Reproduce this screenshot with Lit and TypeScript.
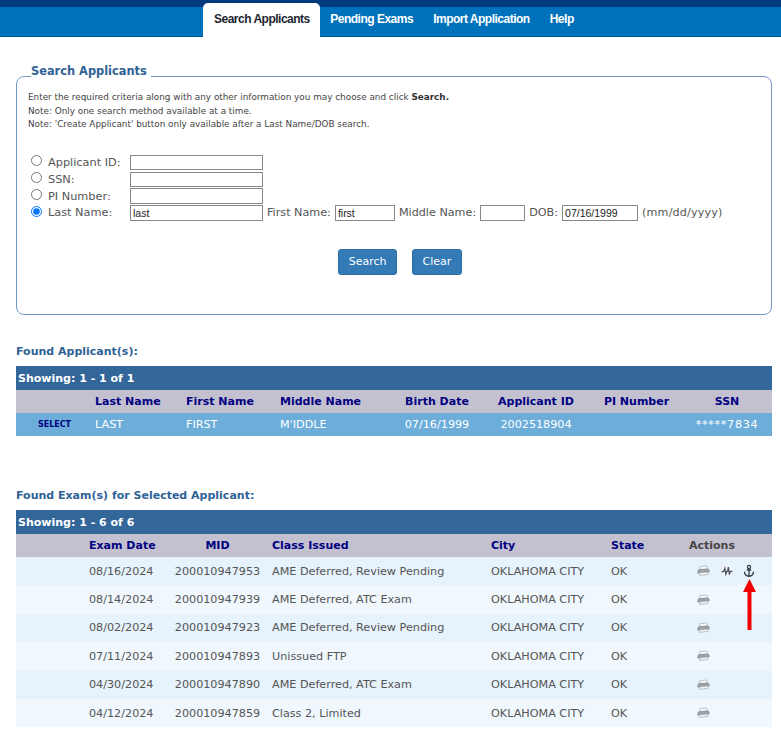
import { LitElement, css, html, svg } from 'lit';
import { customElement } from 'lit/decorators.js';

const printer = svg`<svg class="ico printer" width="13" height="12" viewBox="0 0 13 12">
  <path d="M3 1.6 L9.6 1 L10.6 4 L2.6 4.6 Z" fill="#fbfcfd" stroke="#a4abb1" stroke-width=".7"/>
  <path d="M.8 6 Q.8 4.6 2.8 4.5 L10.4 4 Q12.2 4 12.2 5.4 L12.2 7 L.8 8.2 Z" fill="#9aa3aa" stroke="#7b848a" stroke-width=".5"/>
  <path d="M2 8 L11.4 7 L11 9.4 L2.6 10.4 Z" fill="#f4f6f8" stroke="#a4abb1" stroke-width=".7"/>
</svg>`;

const pulse = svg`<svg class="ico" width="14" height="14" viewBox="0 0 14 14">
  <circle cx="7" cy="7" r="6.5" fill="#f1f2f7"/>
  <path d="M1.5 7.6 H3.6 L4.8 4.4 L5.8 10 L7 7.2 H7.6 L8.4 3.2 L9.4 10.6 L10.4 7.4 H12.5" fill="none" stroke="#46505e" stroke-width="1.25"/>
</svg>`;

const anchor = svg`<svg class="ico" width="14" height="14" viewBox="0 0 14 14">
  <circle cx="7" cy="3" r="1.6" fill="none" stroke="#2f3a44" stroke-width="1.2"/>
  <path d="M7 4.4 V12.2 M4.8 6 H9.2 M2.4 7.6 Q2.8 11.8 7 12.4 Q11.2 11.8 11.6 7.6" fill="none" stroke="#2f3a44" stroke-width="1.3"/>
</svg>`;

const exams = [
  ['08/16/2024', '200010947953', 'AME Deferred, Review Pending', true],
  ['08/14/2024', '200010947939', 'AME Deferred, ATC Exam', false],
  ['08/02/2024', '200010947923', 'AME Deferred, Review Pending', false],
  ['07/11/2024', '200010947893', 'Unissued FTP', false],
  ['04/30/2024', '200010947890', 'AME Deferred, ATC Exam', false],
  ['04/12/2024', '200010947859', 'Class 2, Limited', false],
] as const;

@customElement('app-root')
export class AppRoot extends LitElement {
  static styles = css`
    :host {
      display: block;
      background: #fff;
      color: #555;
      font-family: 'DejaVu Sans', Verdana, sans-serif;
      font-size: 11.3px;
    }

    .topbar {
      height: 7px;
      background: #003b7e;
    }

    nav {
      display: flex;
      height: 29px;
      padding-left: 203px;
      background: #0072bc;
      border-bottom: 1px solid #005a96;
      font-family: 'Liberation Sans', Arial, sans-serif;
      font-size: 12px;
      font-weight: bold;
      letter-spacing: -0.5px;
    }

    nav a {
      padding: 5px 10px 0;
      color: #fff;
    }

    nav a.active {
      margin-top: -4px;
      margin-right: 0.5px;
      margin-bottom: -1px;
      padding-top: 9px;
      padding-left: 11px;
      color: #1c2530;
      background: #fff;
      border-radius: 5px 5px 0 0;
    }

    main {
      padding: 27px 9px 0 16px;
    }

    fieldset {
      height: 251px;
      margin: 0;
      padding: 0 11px;
      box-sizing: border-box;
      border: 1.5px solid #7198c4;
      border-radius: 8px;
    }

    legend {
      margin-left: 3px;
      padding: 0 4px 10px 0;
      color: #2f6296;
      font-size: 11.4px;
      font-weight: bold;
      line-height: 14px;
    }

    .help {
      margin-top: 3px;
      font-size: 8.85px;
      line-height: 13.5px;
      color: #444;
    }

    .help b {
      color: #333;
    }

    .form {
      margin-top: 22.6px;
    }

    .line {
      display: flex;
      align-items: center;
      height: 16.8px;
    }

    .line input[type='radio'] {
      flex: none;
      width: 11px;
      height: 11px;
      margin: 0 6px 3px 3px;
    }

    .line label {
      flex: none;
      width: 82px;
    }

    .line span {
      margin: 0 4px;
      font-size: 11.2px;
    }

    .line span.format {
      letter-spacing: 0.15px;
    }

    .line input[type='text'] {
      box-sizing: border-box;
      height: 15.5px;
      padding: 0 2px;
      border: 1px solid #888;
      font-family: 'Liberation Sans', Arial, sans-serif;
      font-size: 10.5px;
      color: #222;
      background: #fff;
    }

    .w132 { width: 133px; }
    .w60 { width: 60px; }
    .w45 { width: 45px; }
    .w76 { width: 76px; }

    .buttons {
      display: flex;
      justify-content: center;
      gap: 15px;
      margin-top: 27.4px;
      padding-left: 12px;
    }

    button {
      height: 26px;
      padding: 0 9.5px;
      border: 1px solid #2e6da4;
      border-radius: 3px;
      background: #337ab7;
      color: #fff;
      font-family: inherit;
      font-size: 11px;
    }

    h2 {
      margin: 0;
      color: #2f6296;
      font-size: 11px;
      font-weight: bold;
      line-height: 14px;
    }

    .applicants-title {
      margin-top: 30px;
    }

    .exams-title {
      margin-top: 53px;
    }

    .grid-wrap {
      position: relative;
      margin-top: 7px;
    }

    table {
      width: 756px;
      table-layout: fixed;
      border-collapse: collapse;
      font-size: 11.2px;
    }

    .showing {
      height: 24px;
      padding: 0 0 0 2px;
      background: #336699;
      color: #fff;
      font-size: 11px;
      font-weight: bold;
      text-align: left;
    }

    thead tr.cols th {
      height: 23px;
      padding: 0 0 0 7px;
      background: #c3c0d0;
      color: #000080;
      font-size: 11px;
      font-weight: bold;
      text-align: left;
    }

    th.c, td.c {
      text-align: center !important;
      padding-left: 0 !important;
    }

    td {
      padding: 0 0 0 7px;
      white-space: nowrap;
    }

    .selected td {
      height: 23px;
      background: #6cadda;
      color: #fff;
    }

    .selected .select {
      padding: 0 0 0 5px;
      color: #000080;
      font-size: 8px;
      font-weight: bold;
      text-align: center;
    }

    .selected .ssn {
      letter-spacing: 0.7px;
    }

    .exam td {
      height: 28.4px;
      background: #f0f8fe;
    }

    .exam:nth-child(odd) td {
      background: #e6f2fc;
    }

    thead tr.cols th.plain {
      color: #444;
    }

    .ico {
      display: inline-block;
      vertical-align: middle;
    }

    .printer {
      margin-right: 2px;
    }

    .actions {
      display: flex;
      align-items: center;
      gap: 8px;
      padding-left: 8px;
    }

    .arrow {
      position: absolute;
      top: 69px;
      left: 727px;
    }
  `;

  render() {
    return html`
      <div class="topbar"></div>
      <nav>
        <a class="active">Search Applicants</a>
        <a>Pending Exams</a>
        <a>Import Application</a>
        <a>Help</a>
      </nav>
      <main>
        <fieldset>
          <legend>Search Applicants</legend>
          <div class="help">
            Enter the required criteria along with any other information you may choose and click <b>Search.</b><br />
            Note: Only one search method available at a time.<br />
            Note: 'Create Applicant' button only available after a Last Name/DOB search.
          </div>
          <div class="form">
            <div class="line">
              <input type="radio" name="method" /><label>Applicant ID:</label>
              <input type="text" class="w132" />
            </div>
            <div class="line">
              <input type="radio" name="method" /><label>SSN:</label>
              <input type="text" class="w132" />
            </div>
            <div class="line">
              <input type="radio" name="method" /><label>PI Number:</label>
              <input type="text" class="w132" />
            </div>
            <div class="line">
              <input type="radio" name="method" checked /><label>Last Name:</label>
              <input type="text" class="w132" value="last" />
              <span>First Name:</span><input type="text" class="w60" value="first" />
              <span>Middle Name:</span><input type="text" class="w45" />
              <span>DOB:</span><input type="text" class="w76" value="07/16/1999" />
              <span class="format">(mm/dd/yyyy)</span>
            </div>
          </div>
          <div class="buttons">
            <button>Search</button>
            <button>Clear</button>
          </div>
        </fieldset>

        <h2 class="applicants-title">Found Applicant(s):</h2>
        <div class="grid-wrap">
          <table>
            <colgroup>
              <col style="width:72px" /><col style="width:91px" /><col style="width:94px" />
              <col style="width:120px" /><col style="width:88px" /><col style="width:110px" />
              <col style="width:91px" /><col style="width:90px" />
            </colgroup>
            <thead>
              <tr><th class="showing" colspan="8">Showing: 1 - 1 of 1</th></tr>
              <tr class="cols">
                <th></th><th>Last Name</th><th>First Name</th><th>Middle Name</th>
                <th class="c">Birth Date</th><th class="c">Applicant ID</th>
                <th class="c">PI Number</th><th class="c">SSN</th>
              </tr>
            </thead>
            <tbody>
              <tr class="selected">
                <td class="select">SELECT</td><td>LAST</td><td>FIRST</td><td>M'IDDLE</td>
                <td class="c">07/16/1999</td><td class="c">2002518904</td>
                <td class="c"></td><td class="c ssn">*****7834</td>
              </tr>
            </tbody>
          </table>
        </div>

        <h2 class="exams-title">Found Exam(s) for Selected Applicant:</h2>
        <div class="grid-wrap">
          <table>
            <colgroup>
              <col style="width:66px" /><col style="width:88px" /><col style="width:95px" />
              <col style="width:219px" /><col style="width:120px" /><col style="width:78px" />
              <col style="width:90px" />
            </colgroup>
            <thead>
              <tr><th class="showing" colspan="7">Showing: 1 - 6 of 6</th></tr>
              <tr class="cols">
                <th></th><th>Exam Date</th><th class="c">MID</th><th>Class Issued</th>
                <th>City</th><th>State</th><th class="plain">Actions</th>
              </tr>
            </thead>
            <tbody>
              ${exams.map(
                ([date, mid, cls, first]) => html`
                  <tr class="exam">
                    <td></td><td>${date}</td><td class="c">${mid}</td><td>${cls}</td>
                    <td>OKLAHOMA CITY</td><td>OK</td>
                    <td>
                      <div class="actions">
                        ${printer}${first ? html`${pulse}${anchor}` : ''}
                      </div>
                    </td>
                  </tr>
                `
              )}
            </tbody>
          </table>
          <svg class="arrow" width="13" height="51" viewBox="0 0 13 51">
            <path d="M6.5 0 L13 13 H8.5 V51 H4.5 V13 H0 Z" fill="#f00000" />
          </svg>
        </div>
      </main>
    `;
  }
}
